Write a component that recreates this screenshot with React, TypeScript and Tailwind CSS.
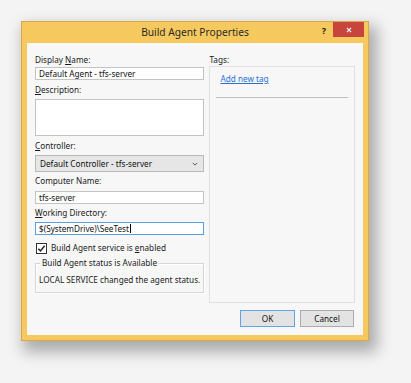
const font = { fontFamily: '"Noto Sans", "Open Sans", sans-serif' };

function Label({ children, className = "" }: { children: React.ReactNode; className?: string }) {
  return <div className={`h-[12px] whitespace-nowrap text-[8.2px] leading-[12px] text-[#1a1a1a] ${className}`}>{children}</div>;
}

export default function App() {
  return (
    <div className="h-[383px] w-[411px] overflow-hidden bg-[#f4f4f4] pl-[21px] pt-[21px]" style={font}>
      <div className="flex h-[320px] w-[348px] flex-col border border-[#d9a947] bg-[#f6c95f] shadow-[5px_8px_14px_3px_rgba(0,0,0,0.3)]">
        {/* title bar */}
        <div className="relative flex h-[21px] items-center justify-center">
          <span className="text-[10.2px] leading-none text-[#2a2a2a]">Build Agent Properties</span>
          <span className="absolute right-[42px] top-[4px] text-[9px] font-bold leading-none text-[#222]">?</span>
          <div className="absolute right-[4px] top-0 flex h-[15px] w-[31px] items-center justify-center bg-[#c7453d]">
            <svg viewBox="0 0 10 10" className="h-[6px] w-[6px]" stroke="white" strokeWidth="1.8">
              <path d="M1.5 1.5l7 7M8.5 1.5l-7 7" />
            </svg>
          </div>
        </div>

        {/* client area */}
        <div className="mx-[5px] flex h-[292px] flex-col bg-[#f7f7f7] px-[8px] pt-[11px] text-[8.2px] leading-[12px] text-[#1a1a1a]">
          <div className="flex">
            {/* left column */}
            <div className="flex w-[170px] flex-col">
              <Label>
                Display <span className="underline">N</span>ame:
              </Label>
              <div className="mt-[1px] h-[13px] whitespace-nowrap border border-[#c3c3c3] bg-white pl-[3px] leading-[11px] text-[#111]">
                Default Agent - tfs-server
              </div>
              <Label className="mt-[4px]">
                <span className="underline">D</span>escription:
              </Label>
              <div className="mt-[3px] h-[37px] border border-[#c3c3c3] bg-white" />
              <Label className="mt-[4px]">
                <span className="underline">C</span>ontroller:
              </Label>
              <div className="mt-[3px] flex h-[17px] items-center justify-between whitespace-nowrap border border-[#b9b9b9] bg-[#e6e6e6] pl-[4px] pr-[5px] text-[#111]">
                <span>Default Controller - tfs-server</span>
                <svg viewBox="0 0 8 5" className="h-[4px] w-[6px]" fill="none" stroke="#555" strokeWidth="1.3">
                  <path d="M1 1l3 3 3-3" />
                </svg>
              </div>
              <Label className="mt-[3px]">Computer Name:</Label>
              <div className="mt-[4px] h-[13px] border border-[#c3c3c3] bg-white pl-[3px] leading-[11px] text-[#111]">
                tfs-server
              </div>
              <Label className="mt-[3px]">
                <span className="underline">W</span>orking Directory:
              </Label>
              <div className="mt-[3px] flex h-[13px] items-center whitespace-nowrap border border-[#5a9fe0] bg-white pl-[3px] leading-[11px] text-[#111]">
                $(SystemDrive)\SeeTest
                <span className="ml-[1px] h-[9px] w-[1px] bg-black" />
              </div>
              <div className="mt-[8px] flex h-[11px] items-center gap-[4px] pl-[1px]">
                <div className="flex h-[11px] w-[11px] items-center justify-center border border-[#333] bg-white">
                  <svg viewBox="0 0 10 10" className="h-[9px] w-[9px]" fill="none" stroke="#222" strokeWidth="1.6">
                    <path d="M1.5 5.2l2.4 2.4 4.6-5.6" />
                  </svg>
                </div>
                <span className="whitespace-nowrap leading-none">
                  Build Agent service is <span className="underline">e</span>nabled
                </span>
              </div>
              <div className="relative mt-[9px] h-[30px] border border-[#d6d6d6] shadow-[inset_1px_1px_0_#ffffff,1px_1px_0_#ffffff]">
                <span className="absolute left-[4px] top-[-7px] whitespace-nowrap bg-[#f7f7f7] px-[2px]">
                  Build Agent status is Available
                </span>
                <div className="whitespace-nowrap pl-[3px] pt-[10px]">LOCAL SERVICE changed the agent status.</div>
              </div>
            </div>

            {/* right column */}
            <div className="ml-[5px] flex w-[146px] flex-col">
              <Label>Tags:</Label>
              <div className="h-[237px] border border-[#e0e0e0] px-[6px] pt-[6px]">
                <div className="h-[12px] pl-[4px] text-[#2a6fd6] underline">Add new tag</div>
                <div className="mt-[12px] h-[1px] bg-[#bdbdbd]" />
              </div>
            </div>
          </div>

          {/* buttons */}
          <div className="mt-[7px] flex justify-end gap-[5px] pr-[1px]">
            <button className="flex h-[17px] w-[55px] items-center justify-center border border-[#5fa6e6] bg-[#e3e3e3] text-[#111]">
              OK
            </button>
            <button className="flex h-[17px] w-[54px] items-center justify-center border border-[#acacac] bg-[#e3e3e3] text-[#111]">
              Cancel
            </button>
          </div>
        </div>
      </div>
    </div>
  );
}
